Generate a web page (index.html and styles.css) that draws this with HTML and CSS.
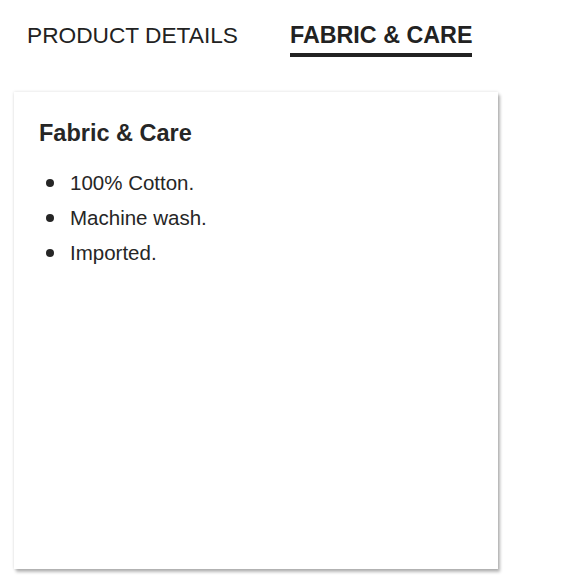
FILE: index.html
```html
<!DOCTYPE html>
<html lang="en">
<head>
<meta charset="utf-8">
<title>Fabric &amp; Care</title>
<link rel="stylesheet" href="styles.css">
</head>
<body>
  <nav class="tabs">
    <div class="tab">PRODUCT DETAILS</div>
    <div class="tab tab-active">FABRIC &amp; CARE</div>
  </nav>
  <section class="card">
    <h2 class="card-title">Fabric &amp; Care</h2>
    <ul class="list">
      <li class="item">100% Cotton.</li>
      <li class="item">Machine wash.</li>
      <li class="item">Imported.</li>
    </ul>
  </section>
</body>
</html>
```
FILE: styles.css
```css
html, body {
  margin: 0;
  padding: 0;
  background: #ffffff;
}
body {
  font-family: "Liberation Sans", Arial, sans-serif;
  color: #262626;
  width: 580px;
  height: 580px;
  overflow: hidden;
}
.tabs {
  display: flex;
  align-items: flex-start;
  gap: 52px;
  padding: 21px 0 0 27px;
  height: 71px;
  box-sizing: border-box;
}
.tab {
  font-size: 22.7px;
  line-height: 28px;
  padding-bottom: 4px;
  color: #222;
}
.tab-active {
  font-weight: bold;
  font-size: 23.3px;
  border-bottom: 4px solid #222;
}
.card {
  margin-left: 14px;
  margin-top: 21px;
  width: 484px;
  height: 477px;
  box-sizing: border-box;
  padding: 28px 25px;
  background: #fff;
  box-shadow: 0 0 3px rgba(0,0,0,0.14), 2px 3px 3px rgba(0,0,0,0.28);
}
.card-title {
  margin: 0;
  font-size: 23.5px;
  line-height: 26px;
  font-weight: bold;
  color: #262626;
}
.list {
  list-style: none;
  margin: 19px 0 0 0;
  padding: 0 0 0 7px;
}
.item {
  display: flex;
  align-items: center;
  gap: 16px;
  font-size: 20.5px;
  line-height: 35px;
  color: #262626;
}
.item::before {
  content: "";
  width: 8px;
  height: 8px;
  border-radius: 50%;
  background: #262626;
  margin-top: 1px;
  flex: none;
}
```
